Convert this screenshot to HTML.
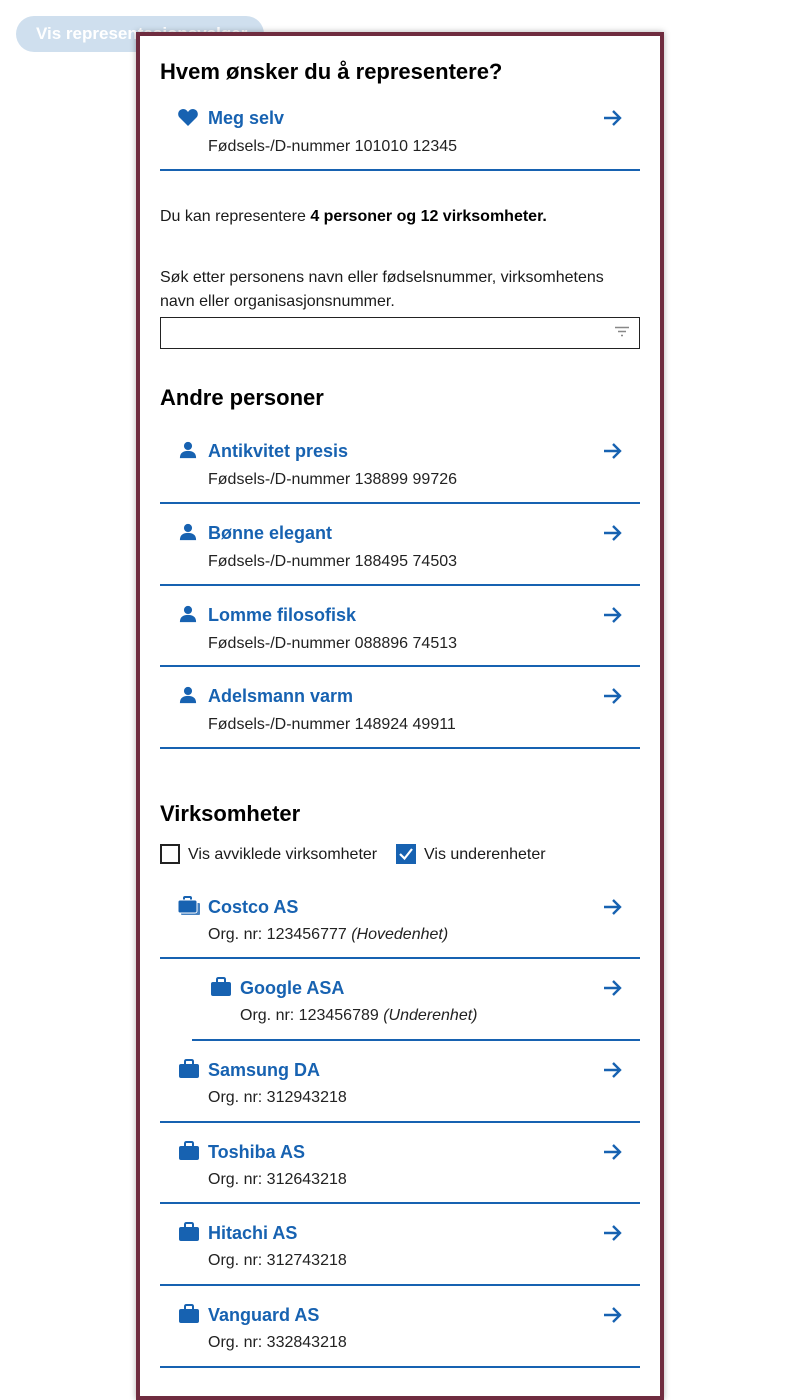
<!DOCTYPE html>
<html><head><meta charset="utf-8"><style>
*{margin:0;padding:0;box-sizing:border-box}
html,body{width:800px;height:1400px;overflow:hidden}
body{background:#fff;font-family:"Liberation Sans",sans-serif;color:#1a1a1a;position:relative}
.btn{position:absolute;left:16px;top:16px;width:248px;height:36px;border-radius:18px;background:#cfdfee;color:#fff;font-weight:bold;font-size:17px;line-height:36px;padding-left:20px;white-space:nowrap;overflow:hidden}
.modal{position:absolute;left:136px;top:32px;width:528px;height:1368px;border:4px solid #6f2c3f;background:#fff;box-shadow:0 0 6px rgba(0,0,0,.3)}
.a{position:absolute}
h2{position:absolute;left:160px;font-size:22px;font-weight:bold;color:#000;margin-top:1px}
.t{position:absolute;font-size:18px;font-weight:bold;color:#1762b1;margin-top:1px}
.s{position:absolute;font-size:16px;color:#222;margin-top:2px}
.l{position:absolute;height:2px;background:#1762b1;right:160px}
.ar{position:absolute;left:601px}
.ic{position:absolute;left:178px}
p{position:absolute;left:160px;font-size:16px;color:#1a1a1a;margin-top:2px}
</style></head><body>
<div class="btn">Vis representasjonsvalger</div>
<div class="modal"></div>
<h2 style="top:58px">Hvem ønsker du å representere?</h2>

<svg class="ic" style="top:108px" width="20" height="18" viewBox="0 0 20 18"><path d="M10 18 L1.5 9.5 C-1 7 0 1.5 5 1 C7.5 1 9 2.5 10 4 C11 2.5 12.5 1 15 1 C20 1.5 21 7 18.5 9.5Z" fill="#1762b1"/></svg>
<div class="t" style="left:208px;top:107px">Meg selv</div>
<div class="s" style="left:208px;top:136px">Fødsels-/D-nummer 101010 12345</div>
<div class="l" style="left:160px;top:169px"></div>

<p style="top:206px">Du kan representere <b style="color:#000">4 personer og 12 virksomheter.</b></p>
<p style="top:264px;line-height:24px;width:480px">Søk etter personens navn eller fødselsnummer, virksomhetens navn eller organisasjonsnummer.</p>
<div class="a" style="left:160px;top:317px;width:480px;height:32px;border:1px solid #222"></div>
<svg class="a" style="left:614px;top:326px" width="16" height="12" viewBox="0 0 16 12"><path d="M1 1.5H15M4 5.5H12M7 9.5H9" stroke="#888" stroke-width="1.5"/></svg>

<h2 style="top:384px">Andre personer</h2>

<svg class="a" width="0" height="0"><defs>
<symbol id="arr" viewBox="0 0 22 20"><path d="M3 10H19M12 3L19 10L12 17" stroke="#1762b1" stroke-width="2.4" fill="none"/></symbol>
<symbol id="per" viewBox="0 0 20 20"><circle cx="10" cy="5.5" r="4.5" fill="#1762b1"/><path d="M1 19C1 13 5 11 10 11S19 13 19 19Z" fill="#1762b1"/></symbol>
<symbol id="bag" viewBox="0 0 22 20"><path d="M7 5V2.5Q7 1 8.5 1H13.5Q15 1 15 2.5V5" stroke="#1762b1" stroke-width="2" fill="none"/><rect x="1" y="5" width="20" height="14" rx="2" fill="#1762b1"/></symbol>
</defs></svg>

<svg class="ic" style="top:441px" width="20" height="18"><use href="#per"/></svg>
<div class="t" style="left:208px;top:440px">Antikvitet presis</div>
<div class="s" style="left:208px;top:469px">Fødsels-/D-nummer 138899 99726</div>
<div class="l" style="left:160px;top:502px"></div>

<svg class="ic" style="top:523px" width="20" height="18"><use href="#per"/></svg>
<div class="t" style="left:208px;top:522px">Bønne elegant</div>
<div class="s" style="left:208px;top:551px">Fødsels-/D-nummer 188495 74503</div>
<div class="l" style="left:160px;top:584px"></div>

<svg class="ic" style="top:605px" width="20" height="18"><use href="#per"/></svg>
<div class="t" style="left:208px;top:604px">Lomme filosofisk</div>
<div class="s" style="left:208px;top:633px">Fødsels-/D-nummer 088896 74513</div>
<div class="l" style="left:160px;top:665px"></div>

<svg class="ic" style="top:686px" width="20" height="18"><use href="#per"/></svg>
<div class="t" style="left:208px;top:685px">Adelsmann varm</div>
<div class="s" style="left:208px;top:714px">Fødsels-/D-nummer 148924 49911</div>
<div class="l" style="left:160px;top:747px"></div>

<h2 style="top:800px">Virksomheter</h2>
<div class="a" style="left:160px;top:844px;width:20px;height:20px;border:2px solid #222"></div>
<p style="left:188px;top:844px">Vis avviklede virksomheter</p>
<div class="a" style="left:396px;top:844px;width:20px;height:20px;background:#1762b1"></div>
<svg class="a" style="left:396px;top:844px" width="20" height="20"><path d="M4 10L8.5 14.5L16 5" stroke="#fff" stroke-width="2.2" fill="none"/></svg>
<p style="left:424px;top:844px">Vis underenheter</p>

<svg class="ic" style="top:896px" width="22" height="20" viewBox="0 0 22 20"><rect x="3" y="7" width="19" height="12" rx="1" fill="#1762b1" opacity=".8"/><path d="M6 4V2Q6 1 7 1H12Q13 1 13 2V4" stroke="#1762b1" stroke-width="2" fill="none"/><rect x="0" y="4" width="19" height="13" rx="2" fill="#1762b1" stroke="#fff" stroke-width="1"/></svg>
<div class="t" style="left:208px;top:896px">Costco AS</div>
<div class="s" style="left:208px;top:924px">Org. nr: 123456777 <i>(Hovedenhet)</i></div>
<div class="l" style="left:160px;top:957px"></div>

<svg class="a" style="left:210px;top:977px" width="22" height="20"><use href="#bag"/></svg>
<div class="t" style="left:240px;top:977px">Google ASA</div>
<div class="s" style="left:240px;top:1005px">Org. nr: 123456789 <i>(Underenhet)</i></div>
<div class="l" style="left:192px;top:1039px"></div>

<svg class="ic" style="top:1059px" width="22" height="20"><use href="#bag"/></svg>
<div class="t" style="left:208px;top:1059px">Samsung DA</div>
<div class="s" style="left:208px;top:1087px">Org. nr: 312943218</div>
<div class="l" style="left:160px;top:1121px"></div>

<svg class="ic" style="top:1141px" width="22" height="20"><use href="#bag"/></svg>
<div class="t" style="left:208px;top:1141px">Toshiba AS</div>
<div class="s" style="left:208px;top:1169px">Org. nr: 312643218</div>
<div class="l" style="left:160px;top:1202px"></div>

<svg class="ic" style="top:1222px" width="22" height="20"><use href="#bag"/></svg>
<div class="t" style="left:208px;top:1222px">Hitachi AS</div>
<div class="s" style="left:208px;top:1250px">Org. nr: 312743218</div>
<div class="l" style="left:160px;top:1284px"></div>

<svg class="ic" style="top:1304px" width="22" height="20"><use href="#bag"/></svg>
<div class="t" style="left:208px;top:1304px">Vanguard AS</div>
<div class="s" style="left:208px;top:1332px">Org. nr: 332843218</div>
<div class="l" style="left:160px;top:1366px"></div>

<svg class="ar" style="top:108px" width="22" height="20"><use href="#arr"/></svg>
<svg class="ar" style="top:441px" width="22" height="20"><use href="#arr"/></svg>
<svg class="ar" style="top:523px" width="22" height="20"><use href="#arr"/></svg>
<svg class="ar" style="top:605px" width="22" height="20"><use href="#arr"/></svg>
<svg class="ar" style="top:686px" width="22" height="20"><use href="#arr"/></svg>
<svg class="ar" style="top:897px" width="22" height="20"><use href="#arr"/></svg>
<svg class="ar" style="top:978px" width="22" height="20"><use href="#arr"/></svg>
<svg class="ar" style="top:1060px" width="22" height="20"><use href="#arr"/></svg>
<svg class="ar" style="top:1142px" width="22" height="20"><use href="#arr"/></svg>
<svg class="ar" style="top:1223px" width="22" height="20"><use href="#arr"/></svg>
<svg class="ar" style="top:1305px" width="22" height="20"><use href="#arr"/></svg>
</body></html>
